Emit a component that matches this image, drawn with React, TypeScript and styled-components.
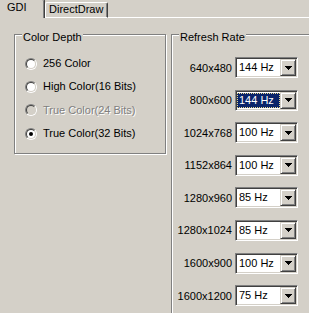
import React from "react";
import styled, { createGlobalStyle } from "styled-components";

const Global = createGlobalStyle`
  html, body { margin: 0; padding: 0; }
  body {
    background: #d4d0c8;
    font-family: "Liberation Sans", Arial, sans-serif;
    font-size: 11px;
    color: #000;
  }
  #root { width: 309px; height: 313px; overflow: hidden; }
`;

const Page = styled.div`
  width: 309px;
  height: 313px;
  overflow: hidden;
  background: #d4d0c8;
  line-height: 13px;
`;

const TabRow = styled.div`
  display: flex;
  align-items: flex-end;
  height: 18px;
  margin-left: -3px;
`;

const Tab = styled.div<{ $active?: boolean; $w: number }>`
  box-sizing: border-box;
  width: ${(p) => p.$w}px;
  height: ${(p) => (p.$active ? 19 : 16)}px;
  border-top: 1px solid #fff;
  border-left: 1px solid #fff;
  border-right: 1px solid #404040;
  border-bottom: ${(p) => (p.$active ? "none" : "1px solid #fff")};
  box-shadow: inset -1px 0 0 #808080;
  border-top-left-radius: 2px;
  border-top-right-radius: 2px;
  padding: ${(p) => (p.$active ? "1px 0 0 9px" : "0 0 0 3px")};
  white-space: nowrap;
`;

const TabFill = styled.div`
  flex: 1;
  height: 1px;
  background: #fff;
`;

const Body = styled.div`
  display: flex;
  align-items: flex-start;
  gap: 5px;
  padding: 16px 0 0 14px;
`;

const Group = styled.div<{ $w: number; $h: number }>`
  box-sizing: border-box;
  flex: none;
  width: ${(p) => p.$w}px;
  height: ${(p) => p.$h}px;
  border: 1px solid #808080;
  box-shadow: inset 1px 1px 0 #fff, 1px 1px 0 #fff;
  display: flex;
  flex-direction: column;
  align-items: flex-start;
`;

const Legend = styled.span<{ $ml: number }>`
  display: inline-block;
  margin: -4px 0 0 ${(p) => p.$ml}px;
  padding: 0 1px;
  height: 13px;
  background: #d4d0c8;
  white-space: nowrap;
`;

const RadioList = styled.div`
  display: flex;
  flex-direction: column;
  padding: 8px 0 0 10px;
`;

const RadioRow = styled.div<{ $disabled?: boolean }>`
  display: flex;
  align-items: center;
  gap: 6px;
  height: 23.3px;
  white-space: nowrap;
  color: ${(p) => (p.$disabled ? "#808080" : "#000")};
  text-shadow: ${(p) => (p.$disabled ? "1px 1px 0 #fff" : "none")};
`;

const RadioOuter = styled.span`
  box-sizing: border-box;
  flex: none;
  width: 12px;
  height: 12px;
  border-radius: 50%;
  border: 1px solid;
  border-color: #808080 #fff #fff #808080;
  display: flex;
`;

const RadioInner = styled.span<{ $disabled?: boolean }>`
  box-sizing: border-box;
  flex: 1;
  border-radius: 50%;
  border: 1px solid;
  border-color: #404040 #d4d0c8 #d4d0c8 #404040;
  background: ${(p) => (p.$disabled ? "#d4d0c8" : "#fff")};
  display: flex;
  align-items: center;
  justify-content: center;
`;

const RadioDot = styled.span`
  width: 4px;
  height: 4px;
  border-radius: 50%;
  background: #000;
`;

const RateList = styled.div`
  display: flex;
  flex-direction: column;
  gap: 11.6px;
  padding-top: 13px;
`;

const RateRow = styled.div`
  display: flex;
  align-items: center;
  height: 21px;
`;

const ResLabel = styled.span`
  width: 60px;
  text-align: right;
  margin-right: 3px;
  padding-top: 1px;
  white-space: nowrap;
`;

const Combo = styled.div`
  box-sizing: border-box;
  width: 63px;
  height: 21px;
  border: 1px solid;
  border-color: #808080 #fff #fff #808080;
  box-shadow: inset 1px 1px 0 #404040, inset -1px -1px 0 #d4d0c8;
  background: #fff;
  padding: 1px;
  display: flex;
`;

const ComboValue = styled.div<{ $focused?: boolean }>`
  box-sizing: border-box;
  flex: 1;
  margin: 1px 0;
  padding-left: 1px;
  border: 1px ${(p) => (p.$focused ? "dotted #e8d890" : "solid transparent")};
  background: ${(p) => (p.$focused ? "#0a246a" : "transparent")};
  color: ${(p) => (p.$focused ? "#fff" : "#000")};
  line-height: 13px;
  white-space: nowrap;
`;

const ComboButton = styled.div`
  box-sizing: border-box;
  flex: none;
  width: 16px;
  height: 17px;
  background: #d4d0c8;
  border: 1px solid;
  border-color: #d4d0c8 #404040 #404040 #d4d0c8;
  box-shadow: inset 1px 1px 0 #fff, inset -1px -1px 0 #808080;
  display: flex;
  align-items: center;
  justify-content: center;
`;

const Arrow = () => (
  <svg width="7" height="4" viewBox="0 0 7 4">
    <path d="M0 0H7L3.5 4Z" fill="#000" shapeRendering="crispEdges" />
  </svg>
);

const Radio = ({ checked, disabled }: { checked?: boolean; disabled?: boolean }) => (
  <RadioOuter>
    <RadioInner $disabled={disabled}>{checked && <RadioDot />}</RadioInner>
  </RadioOuter>
);

const depths = [
  { label: "256 Color" },
  { label: "High Color(16 Bits)" },
  { label: "True Color(24 Bits)", disabled: true },
  { label: "True Color(32 Bits)", checked: true },
];

const rates = [
  ["640x480", "144 Hz"],
  ["800x600", "144 Hz", true],
  ["1024x768", "100 Hz"],
  ["1152x864", "100 Hz"],
  ["1280x960", "85 Hz"],
  ["1280x1024", "85 Hz"],
  ["1600x900", "100 Hz"],
  ["1600x1200", "75 Hz"],
] as [string, string, boolean?][];

export default function App() {
  return (
    <Page>
      <Global />
      <TabRow>
        <Tab $active $w={48}>GDI</Tab>
        <Tab $w={63}>DirectDraw</Tab>
        <TabFill />
      </TabRow>
      <Body>
        <Group $w={152} $h={120}>
          <Legend $ml={7}>Color Depth</Legend>
          <RadioList>
            {depths.map((d) => (
              <RadioRow key={d.label} $disabled={d.disabled}>
                <Radio checked={d.checked} disabled={d.disabled} />
                <span>{d.label}</span>
              </RadioRow>
            ))}
          </RadioList>
        </Group>
        <Group $w={150} $h={320}>
          <Legend $ml={7}>Refresh Rate</Legend>
          <RateList>
            {rates.map(([res, hz, focused]) => (
              <RateRow key={res}>
                <ResLabel>{res}</ResLabel>
                <Combo>
                  <ComboValue $focused={focused}>{hz}</ComboValue>
                  <ComboButton>
                    <Arrow />
                  </ComboButton>
                </Combo>
              </RateRow>
            ))}
          </RateList>
        </Group>
      </Body>
    </Page>
  );
}
